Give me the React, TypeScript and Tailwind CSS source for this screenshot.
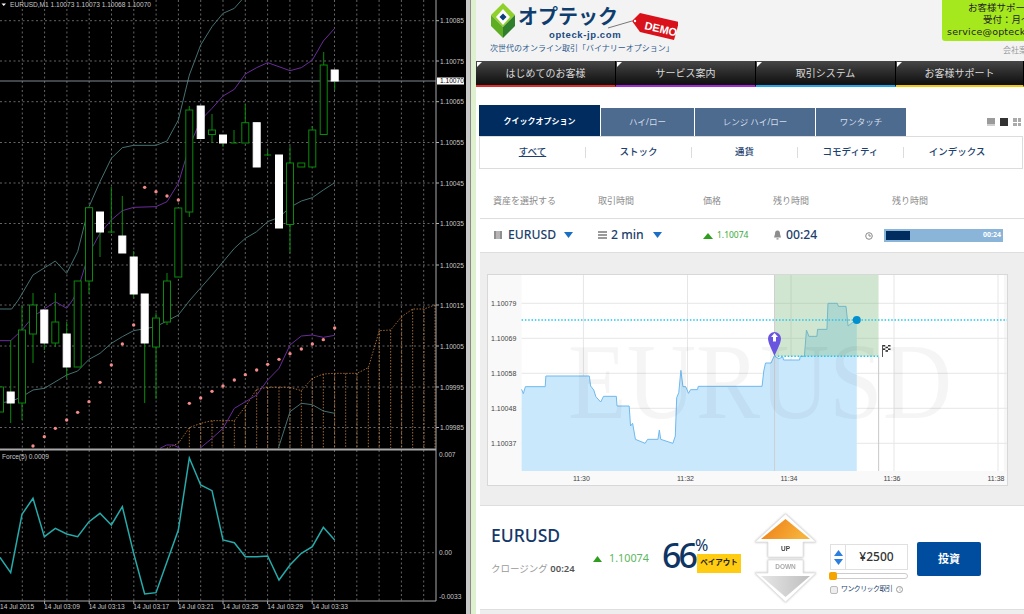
const grid = "#7d7d7d";
const green = "#0a8a0a";

// candles: x, body top, body bottom, wick top, wick bottom, white?
const candles: [number, number, number, number, number, boolean][] = [
  [0, 387, 412, 387, 412, false],
  [10.7, 392, 403, 340, 423, true],
  [22, 330, 403, 305, 420, false],
  [33, 305, 334, 293, 363, false],
  [44.3, 310, 343, 310, 350, true],
  [55.3, 322, 343, 293, 347, false],
  [66.7, 334, 367, 322, 378, true],
  [77.7, 281, 367, 281, 367, false],
  [89, 207.7, 281, 207, 294, false],
  [100, 212, 232, 212, 257, true],
  [111.3, 232, 232, 187, 233, false],
  [122.3, 236, 253, 196, 253, true],
  [133.7, 257, 294, 251, 298, true],
  [144.7, 294, 343, 294, 403, true],
  [156, 318, 347, 313, 399, false],
  [167, 281, 322, 273, 325, false],
  [178.3, 208, 277, 208, 277, false],
  [189.3, 110, 212, 106, 217, false],
  [200.7, 106, 138.5, 106, 138.5, true],
  [212, 130, 134.5, 114, 143, false],
  [223, 135, 143, 135, 147, true],
  [234, 143, 143, 130, 143, false],
  [245.3, 122.7, 143, 104, 143, false],
  [256.7, 122.7, 167, 122.7, 167, true],
  [267.7, 155, 155, 150, 156, false],
  [279, 155, 228, 155, 228, true],
  [290, 163, 224.5, 146, 253, false],
  [301.3, 163, 167, 163, 167, false],
  [312.3, 130, 167, 126, 167, false],
  [323.7, 65, 134.5, 52, 134.5, false],
  [334.7, 70, 81, 70, 90, true],
];

// the traces below are in 3x crop coordinates, top half and bottom half of the chart
const top = (p: number[][]) => p.map(([x, y]) => `${x / 3},${y / 3}`).join(" ");
const low = (p: number[][]) => p.map(([x, y]) => `${x / 3},${300 + y / 3}`).join(" ");

const bandUpperA = [[0, 27], [35, 27], [55, 0]];
const bandUpper = [[55, 900], [99, 825], [166, 783], [200, 820], [233, 755], [267, 620], [300, 545], [334, 475], [367, 443], [401, 436], [468, 436], [501, 423], [535, 360], [568, 225], [602, 135], [636, 80], [669, 40], [703, 25], [725, 0]];
const midA = [[0, 122], [32, 122], [66, 90], [99, 50], [133, 27], [166, 5], [200, 25], [218, 0]];
const mid = [[218, 900], [233, 870], [267, 760], [300, 700], [334, 660], [367, 632], [401, 622], [468, 620], [501, 605], [535, 550], [568, 440], [602, 360], [636, 325], [669, 288], [703, 268], [736, 222], [770, 203], [803, 188], [870, 212], [904, 203], [937, 180], [970, 123], [1004, 85]];
const purpleLow = [[600, 445], [636, 415], [669, 385], [703, 325], [770, 285], [803, 240], [837, 205], [870, 135], [904, 108], [937, 105], [970, 112], [1004, 106]];
const purpleBit = [[480, 445], [500, 435], [520, 435], [540, 445]];
const bandLowerTop = [[570, 900], [636, 825], [703, 745], [736, 715], [770, 695], [803, 665], [837, 652], [870, 622], [904, 603], [937, 593], [970, 570], [1004, 548]];
const bandLower = [[0, 308], [32, 305], [66, 290], [99, 270], [133, 265], [200, 225], [233, 213], [267, 178], [300, 160], [334, 130], [367, 110], [401, 92], [468, 80], [535, 45], [570, 0]];
const tealLow = [[835, 445], [870, 335], [904, 310], [937, 314], [970, 333], [1004, 340]];
const cloud = [[500, 445], [535, 430], [568, 383], [602, 370], [636, 362], [669, 362], [703, 362], [736, 320], [770, 268], [803, 262], [837, 262], [870, 262], [904, 272], [937, 235], [970, 222], [1004, 220], [1037, 220], [1071, 220], [1105, 203], [1138, 92], [1172, 90], [1205, 50], [1238, 27], [1272, 27], [1305, 15]];
const force = [[0, 772], [32, 818], [66, 643], [99, 595], [133, 710], [166, 685], [200, 702], [233, 710], [267, 665], [300, 640], [334, 675], [367, 620], [401, 760], [434, 882], [468, 878], [501, 785], [535, 690], [568, 474], [602, 555], [636, 572], [669, 720], [703, 728], [736, 770], [770, 770], [803, 768], [837, 840], [870, 795], [904, 760], [937, 740], [970, 682], [1004, 720]];
const sarTop = [[434, 562], [468, 575], [501, 588], [535, 600]];
const sarLow = [[99, 438], [133, 410], [166, 385], [200, 360], [233, 337], [267, 305], [300, 247], [334, 195], [367, 132], [401, 75], [568, 310], [602, 294], [636, 274], [669, 258], [703, 240], [736, 224], [770, 210], [803, 193], [837, 178], [870, 161], [904, 147], [937, 132], [970, 119], [1004, 84]];

const prices = [
  ["1.10085", 20.7], ["1.10075", 61], ["1.10065", 101.7], ["1.10055", 142.5], ["1.10045", 183],
  ["1.10035", 223.5], ["1.10025", 265], ["1.10015", 305], ["1.10005", 346], ["1.09995", 387], ["1.09985", 427.5],
] as const;
const times = ["14 Jul 03:09", "14 Jul 03:13", "14 Jul 03:17", "14 Jul 03:21", "14 Jul 03:25", "14 Jul 03:29", "14 Jul 03:33"];

function TradingChart() {
  const verticals = Array.from({ length: 19 }, (_, i) => 22.3 * (i + 1));
  return (
    <svg viewBox="0 0 466 614" className="w-[466px] h-[614px] shrink-0 bg-black" fontFamily="'Liberation Sans', sans-serif">
      {verticals.map((x) => (
        <line key={x} x1={x} x2={x} y1={0} y2={601} stroke={grid} strokeWidth={0.8} strokeDasharray="2 2.5" />
      ))}
      {prices.map(([p, y]) => (
        <g key={p}>
          <line x1={0} x2={436} y1={y} y2={y} stroke={grid} strokeWidth={0.8} strokeDasharray="2 2.5" />
          <line x1={436} x2={439} y1={y} y2={y} stroke="#b0b0b0" />
          <text x={440} y={y + 2.6} fontSize={6.6} fill="#c8c8c8">{p}</text>
        </g>
      ))}
      <line x1={0} x2={436} y1={552.7} y2={552.7} stroke={grid} strokeWidth={0.8} strokeDasharray="2 2.5" />

      {cloud.filter(([x]) => x >= 568).map(([x, y]) => (
        <line key={x} x1={x / 3} x2={x / 3} y1={300 + y / 3} y2={448} stroke="#c8813c" strokeWidth={0.8} strokeDasharray="1.5 1.5" />
      ))}
      <polyline points={low(cloud)} fill="none" stroke="#c8813c" strokeWidth={0.8} strokeDasharray="1.5 1.5" />

      <g fill="none" strokeWidth={1}>
        <polyline points={low(bandUpperA)} stroke="#467070" />
        <polyline points={top(bandUpper)} stroke="#467070" />
        <polyline points={low(bandLower)} stroke="#467070" />
        <polyline points={top(bandLowerTop)} stroke="#467070" />
        <polyline points={low(tealLow)} stroke="#467070" />
        <polyline points={low(midA)} stroke="#6a2c9c" />
        <polyline points={top(mid)} stroke="#6a2c9c" />
        <polyline points={low(purpleLow)} stroke="#6a2c9c" />
        <polyline points={low(purpleBit)} stroke="#6a2c9c" />
      </g>

      <line x1={0} x2={436} y1={81} y2={81} stroke="#7f898f" />

      {candles.map(([x, a, b, w1, w2, white]) => (
        <g key={x}>
          <line x1={x} x2={x} y1={w1} y2={w2} stroke={green} strokeWidth={1} />
          {a === b ? (
            <line x1={x - 3.5} x2={x + 3.5} y1={a} y2={a} stroke={green} strokeWidth={1} />
          ) : (
            <rect x={x - 3.5} y={a} width={7} height={b - a} fill={white ? "#fff" : "#000"} stroke={white ? "#fff" : green} strokeWidth={1} />
          )}
        </g>
      ))}

      {[...top(sarTop).split(" "), ...low(sarLow).split(" ")].map((pt) => {
        const [x, y] = pt.split(",").map(Number);
        return <circle key={pt} cx={x} cy={y} r={1.7} fill="#f58a8a" />;
      })}

      <rect x={0} y={448.5} width={436} height={2} fill="#a8a8a8" />
      <path d="M0 601H436V0" fill="none" stroke="#a8a8a8" strokeWidth={1} />

      <polyline points={low(force)} fill="none" stroke="#27aaaa" strokeWidth={1.5} />

      <polygon points="1.5,3.5 6,3.5 3.75,6" fill="#fff" />
      <text x={10} y={7} fontSize={6.6} fill="#c8c8c8" textLength={141}>EURUSD,M1  1.10073 1.10073 1.10068 1.10070</text>
      <text x={2} y={459} fontSize={6.6} fill="#c8c8c8">Force(5) 0.0009</text>

      <rect x={437} y={77.5} width={27} height={7} fill="#fff" />
      <text x={440} y={83.2} fontSize={6.6} fill="#000">1.10070</text>
      <text x={439} y={457} fontSize={6.6} fill="#c8c8c8">0.007</text>
      <text x={439} y={555} fontSize={6.6} fill="#c8c8c8">0.00</text>
      <text x={439} y={598.5} fontSize={6.6} fill="#c8c8c8">-0.0033</text>

      <text x={0} y={609} fontSize={6.6} fill="#c8c8c8">14 Jul 2015</text>
      {times.map((t, i) => (
        <g key={t}>
          <line x1={44.6 + 44.6 * i} x2={44.6 + 44.6 * i} y1={601} y2={604} stroke="#a8a8a8" />
          <text x={44 + 44.65 * i} y={609} fontSize={6.6} fill="#c8c8c8">{t}</text>
        </g>
      ))}
    </svg>
  );
}

function Logo() {
  return (
    <div className="relative w-[210px] pl-[15px] pt-[3px]">
      <div className="flex gap-[3px]">
        <svg viewBox="0 0 24 35" className="w-[24px] h-[35px] shrink-0">
          <polygon points="12,0 24,12 12,24 0,12" fill="#8fd12a" />
          <polygon points="0,12 12,24 12,35 0,23" fill="#5fae22" />
          <polygon points="24,12 12,24 12,35 24,23" fill="#2f7f2c" />
          <polygon points="12,6 19,14 12,22 5,14" fill="#fff" />
          <polygon points="12,10.5 15.5,14 12,17.5 8.5,14" fill="#0f3f78" />
        </svg>
        <div className="w-[110px]">
          <div className="text-[20px] leading-[26px] font-bold text-[#0e3d6e] font-['Noto_Sans_CJK_JP',sans-serif]">オプテック</div>
          <div className="mt-[1px] ml-[31px] text-[9.5px] leading-[10px] font-bold text-[#1a4a80] tracking-[0.6px] font-['Liberation_Sans',sans-serif]">opteck-jp.com</div>
        </div>
      </div>
      <div className="mt-[3px] -ml-[1px] text-[8px] leading-[10px] text-[#2f5a8c] whitespace-nowrap">次世代のオンライン取引「バイナリーオプション」</div>
      <svg viewBox="0 0 70 36" className="absolute left-[132px] top-[10px] w-[70px] h-[36px]">
        <line x1="0" y1="18" x2="24" y2="11" stroke="#777" strokeWidth="1" />
        <polygon points="32,3 71,12 66,30 32,22 24,11" fill="#d9111b" />
        <circle cx="27" cy="11" r="1.2" fill="#fff" />
        <text x="36" y="19" fontSize="11" fontWeight="700" fill="#fff" fontFamily="'Liberation Sans', sans-serif" transform="rotate(13 36 19)">DEMO</text>
      </svg>
    </div>
  );
}

const navItems = [
  { label: "はじめてのお客様", color: "border-b-[#e52b2b]", w: "w-[140px]" },
  { label: "サービス案内", color: "border-b-[#a32bd6]", w: "w-[140px]" },
  { label: "取引システム", color: "border-b-[#23a6e8]", w: "w-[140px]" },
  { label: "お客様サポート", color: "border-b-[#f2c80f]", w: "w-[128px]" },
];

function Nav() {
  return (
    <div className="flex h-[26px] shrink-0">
      {navItems.map((n) => (
        <div key={n.label} className={`${n.w} ${n.color} relative flex items-center justify-center border-b-2 border-r border-r-[#000] bg-gradient-to-b from-[#474747] to-[#0f0f0f] text-[10px] text-[#d8d8d8]`}>
          <span className="absolute left-[1px] top-[1px] h-0 w-0 border-t-[5px] border-r-[5px] border-t-white border-r-transparent" />
          {n.label}
        </div>
      ))}
    </div>
  );
}

function Tabs() {
  const other = [
    { label: "ハイ/ロー", w: "w-[93px]" },
    { label: "レンジ ハイ/ロー", w: "w-[120px]" },
    { label: "ワンタッチ", w: "w-[90px]" },
  ];
  return (
    <div className="flex items-end h-[49px] pl-[3px] shrink-0">
      <div className="w-[121px] h-[31px] mr-[1px] flex items-center justify-center bg-[#002c5f] text-white text-[8px] font-bold">クイックオプション</div>
      {other.map((t) => (
        <div key={t.label} className={`${t.w} h-[28px] mr-[1px] flex items-center justify-center bg-[#4d6a8f] text-[#d4dde8] text-[8.5px]`}>{t.label}</div>
      ))}
      <div className="ml-auto flex gap-[5px] pb-[10px] pr-[3px]">
        <div className="w-[8px] h-[8px] bg-[#9a9a9a] border-b-2 border-[#cfcfcf]" />
        <div className="w-[8px] h-[8px] bg-[#333]" />
        <div className="w-[8px] h-[8px] grid grid-cols-2 gap-[1px]">
          <span className="bg-[#aaa]" /><span className="bg-[#aaa]" /><span className="bg-[#aaa]" /><span className="bg-[#aaa]" />
        </div>
      </div>
    </div>
  );
}

function Categories() {
  const items = [
    { label: "すべて", cls: "underline" },
    { label: "ストック", cls: "" },
    { label: "通貨", cls: "" },
    { label: "コモディティ", cls: "" },
    { label: "インデックス", cls: "" },
  ];
  return (
    <div className="ml-[3px] mr-[1px] h-[33px] shrink-0 flex items-center bg-white border border-[#dcdcdc] text-[9.5px] font-medium text-[#1c3f6e]">
      {items.map((c, i) => (
        <div key={c.label} className={`w-[106px] h-[11px] flex items-center justify-center ${i < 4 ? "border-r border-[#dcdcdc]" : ""} ${c.cls}`}>{c.label}</div>
      ))}
    </div>
  );
}

function Caret() {
  return (
    <svg viewBox="0 0 9 6" className="w-[9px] h-[6px]">
      <polygon points="0,0 9,0 4.5,6" fill="#1a6fc4" />
    </svg>
  );
}

function AssetRow() {
  return (
    <>
      <div className="flex items-end h-[49px] pb-[11px] pl-[17px] text-[9px] leading-[12px] text-[#8a8a8a] shrink-0">
        <span className="w-[105px]">資産を選択する</span>
        <span className="w-[105px]">取引時間</span>
        <span className="w-[70px]">価格</span>
        <span className="w-[119px]">残り時間</span>
        <span>残り時間</span>
      </div>
      <div className="ml-[4px] h-[35px] flex items-center shrink-0 bg-white border-y border-[#dedede] text-[12.2px] font-medium text-[#1d3f6b]">
        <div className="w-[118px] pl-[14px] flex items-center">
          <span className="w-[8px] h-[8px] mr-[6px] bg-[#b5b5b5] border-x-2 border-[#8f8f8f]" />
          <span>EURUSD</span>
          <span className="ml-[8px]"><Caret /></span>
        </div>
        <div className="w-[105px] flex items-center">
          <span className="w-[9px] h-[8px] mr-[4px] flex flex-col justify-between">
            <i className="h-[2px] bg-[#9a9a9a]" /><i className="h-[2px] bg-[#9a9a9a]" /><i className="h-[2px] bg-[#9a9a9a]" />
          </span>
          <span>2 min</span>
          <span className="ml-[9px]"><Caret /></span>
        </div>
        <div className="w-[70px] flex items-center gap-[4px] text-[8.5px] font-normal text-[#3aaa3a]">
          <svg viewBox="0 0 10 6" className="w-[10px] h-[6px]"><polygon points="5,0 10,6 0,6" fill="#2f9e1f" /></svg>
          1.10074
        </div>
        <div className="w-[92px] flex items-center gap-[4px]">
          <svg viewBox="0 0 9 10" className="w-[9px] h-[10px]">
            <path d="M4.5 0.5C2.5 0.5 2 2 2 4L1 7.5H8L7 4C7 2 6.5 0.5 4.5 0.5ZM3.5 8.3H5.5V9.5H3.5Z" fill="#8d8d8d" />
          </svg>
          <span>00:24</span>
        </div>
        <div className="w-[19px] flex items-center">
          <svg viewBox="0 0 8 8" className="w-[8px] h-[8px]" fill="none" stroke="#888">
            <circle cx="4" cy="4" r="3.3" /><path d="M4 2V4H6" />
          </svg>
        </div>
        <div className="w-[119px] h-[13px] p-[2px] flex items-center justify-between bg-[#8ab4d8]">
          <span className="w-[24px] h-[9px] bg-[#002c5f]" />
          <span className="text-[7px] font-bold text-white">00:24</span>
        </div>
      </div>
    </>
  );
}

const area = [[117, 370], [122, 383], [128, 362], [185, 362], [187, 330], [312, 330], [316, 360], [325, 372], [331, 392], [345, 408], [353, 391], [390, 391], [392, 420], [427, 420], [431, 480], [437, 472], [445, 520], [473, 532], [480, 520], [510, 520], [514, 492], [518, 520], [553, 532], [560, 510], [564, 395], [570, 380], [576, 313], [582, 362], [590, 362], [598, 382], [604, 371], [624, 371], [626, 361], [810, 361], [815, 315], [820, 291], [836, 291], [845, 270], [858, 278], [870, 273], [872, 282], [918, 282], [920, 271], [932, 271], [938, 192], [945, 211], [968, 211], [970, 190], [997, 190], [1000, 112], [1027, 112], [1030, 121], [1052, 121], [1058, 180], [1070, 170], [1083, 162]];
const px = (x: number) => 480 + x / 2.882;
const py = (y: number) => 265 + y / 3;

function PriceChart() {
  const line = area.map(([x, y]) => `${px(x)},${py(y)}`).join(" ");
  const yLines = [["1.10079", 302.3], ["1.10069", 337.3], ["1.10058", 372.3], ["1.10048", 407.3], ["1.10037", 442.3]] as const;
  const xLines = [["11:30", 582.4], ["11:32", 686.5], ["11:34", 790], ["11:36", 893], ["11:38", 997]] as const;
  return (
    <svg viewBox="487 274 519 210" className="w-[519px] h-[210px] bg-white" fontFamily="'Liberation Sans', sans-serif">
      <rect x={487} y={274} width={33.6} height={210} fill="#f9f9f9" />
      <rect x={487} y={470} width={519} height={14} fill="#f9f9f9" />
      <rect x={1003} y={274} width={3} height={196} fill="#f7f7f7" />
      {yLines.map(([t, y]) => (
        <g key={t}>
          <line x1={520.6} x2={1006} y1={y} y2={y} stroke="#e6e6e6" />
          <text x={490} y={y + 2.5} fontSize={7} fill="#444">{t}</text>
        </g>
      ))}
      {xLines.map(([t, x]) => (
        <g key={t}>
          <line x1={x} x2={x} y1={274} y2={470} stroke="#e6e6e6" />
          <text x={x - 2} y={480} fontSize={7} fill="#444" textAnchor="middle">{t}</text>
        </g>
      ))}
      <polygon points={`${px(117)},470 ${line} ${px(1083)},470`} fill="#c9e8fc" />
      <polyline points={line} fill="none" stroke="#6fb9ee" strokeWidth={1} />
      <rect x={px(846)} y={274} width={104} height={py(271) - 274} fill="#7ab87a" fillOpacity={0.35} />
      <line x1={px(846)} x2={px(846)} y1={274} y2={470} stroke="#cfcfcf" />
      <line x1={px(1146)} x2={px(1146)} y1={356} y2={470} stroke="#c8c8c8" />
      <text x={567} y={417} fontSize={108} fontFamily="'Liberation Serif', serif" fill="#000" fillOpacity={0.04} textLength={384} lengthAdjust="spacingAndGlyphs">EURUSD</text>
      <line x1={520.6} x2={1006} y1={py(162)} y2={py(162)} stroke="#22c5ee" strokeWidth={1.5} strokeDasharray="1.5 1.8" />
      <line x1={px(846)} x2={px(1146)} y1={py(271)} y2={py(271)} stroke="#22c5ee" strokeWidth={1.5} strokeDasharray="1.5 1.8" />
      <circle cx={px(1083)} cy={py(162)} r={4} fill="#0090d0" />
      <path d="M767 337.5A6.5 6.5 0 1 1 780 337.5C780 342 775.5 350 773.5 355C771.5 350 767 342 767 337.5Z" fill="#6a55e0" />
      <path d="M773.5 332L777 336H775V340.5H772V336H770Z" fill="#fff" />
      <g>
        <rect x={881} y={344} width={1} height={12} fill="#555" />
        {[0, 1, 2, 3].map((r) =>
          [0, 1, 2].map((c) => (
            <rect key={`${r}${c}`} x={882 + c * 2.5} y={344 + r * 1.7} width={2.5} height={1.7} fill={(r + c) % 2 ? "#fff" : "#333"} />
          ))
        )}
      </g>
    </svg>
  );
}

function UpDown() {
  return (
    <svg viewBox="755 512 61 92" className="w-[61px] h-[92px] shrink-0 drop-shadow-[0_0_1px_#bbb]" fontFamily="'Liberation Sans', sans-serif">
      <defs>
        <linearGradient id="orange" x1="0" x2="1" y1="0" y2="0.3">
          <stop offset="0" stopColor="#ee7a12" />
          <stop offset="1" stopColor="#f6b23c" />
        </linearGradient>
        <linearGradient id="grey" x1="0" x2="1" y1="0" y2="0">
          <stop offset="0" stopColor="#e6e6e6" />
          <stop offset="1" stopColor="#bfbfbf" />
        </linearGradient>
      </defs>
      <polygon points="785.5,514 816,542 803,542 803,557 768,557 768,542 755,542" fill="#fff" stroke="#e2e2e2" strokeWidth={0.8} />
      <polygon points="785.5,519 810,539 761,539" fill="url(#orange)" />
      <text x={785.5} y={551} fontSize={6.5} fontWeight={700} fill="#444" textAnchor="middle">UP</text>
      <polygon points="768,560 803,560 803,573 816,573 785.5,602 755,573 768,573" fill="#fff" stroke="#e2e2e2" strokeWidth={0.8} />
      <polygon points="761,576 810,576 785.5,597" fill="url(#grey)" />
      <text x={785.5} y={569} fontSize={6.5} fontWeight={700} fill="#aaa" textAnchor="middle">DOWN</text>
    </svg>
  );
}

function TradePanel() {
  return (
    <div className="h-[105px] flex items-center shrink-0 bg-white border-y border-[#dedede] pl-[11px]">
      <div className="w-[102px] mb-[16px]">
        <div className="text-[17.5px] leading-[24px] font-medium text-[#14386a]">EURUSD</div>
        <div className="mt-[15px] text-[9.5px] leading-[14px] text-[#9a9a9a] whitespace-nowrap">クロージング <b className="text-[#555] font-semibold">00:24</b></div>
      </div>
      <div className="w-[69px] mt-[2px] flex items-center text-[10.8px] text-[#5cb85c]">
        <svg viewBox="0 0 9 6" className="w-[9px] h-[6px] mr-[7px]"><polygon points="4.5,0 9,6 0,6" fill="#2f9e1f" /></svg>
        1.10074
      </div>
      <div className="relative w-[93px] h-[50px] shrink-0">
        <span className="absolute left-0 top-0 text-[34px] leading-[44px] tracking-[-3px] font-medium text-[#0e3564]">66</span>
        <span className="absolute left-[33px] top-[2px] text-[16px] leading-[20px] text-[#0e3564]">%</span>
        <span className="absolute left-[35px] top-[21px] w-[44px] h-[19px] flex items-center justify-center bg-[#ffcc11] text-[7.5px] font-bold text-[#222]">ペイアウト</span>
      </div>
      <UpDown />
      <div className="ml-[14px] mt-[24px] w-[78px]">
        <div className="h-[26px] flex border border-[#e0e0e0] bg-white">
          <div className="w-[15px] flex flex-col items-center justify-center gap-[3px] border-r border-[#e0e0e0]">
            <svg viewBox="0 0 9 6" className="w-[9px] h-[6px]"><polygon points="4.5,0 9,6 0,6" fill="#2a7fe0" /></svg>
            <svg viewBox="0 0 9 6" className="w-[9px] h-[6px]"><polygon points="0,0 9,0 4.5,6" fill="#2a7fe0" /></svg>
          </div>
          <div className="flex-1 flex items-center justify-center text-[12px] font-medium text-[#333]">¥2500</div>
        </div>
        <div className="relative mt-[3px] h-[6px] rounded-full border border-[#ccc] bg-white">
          <span className="absolute -left-[2px] -top-[2px] w-[8px] h-[8px] rounded-[2px] bg-[#f5a500]" />
        </div>
        <div className="mt-[5px] flex items-center text-[7px] tracking-[-0.6px] text-[#1d3f6b] whitespace-nowrap">
          <span className="w-[8px] h-[8px] mr-[3px] rounded-[2px] border border-[#bbb] bg-[#eee]" />
          ワンクリック取引
          <span className="ml-[4px] w-[7px] h-[7px] rounded-full border border-[#999] text-[5px] leading-[5px] text-center text-[#888]">i</span>
        </div>
      </div>
      <div className="ml-[9px] mt-[3px] w-[64px] h-[34px] flex items-center justify-center rounded-[2px] bg-[#004da0] text-[11px] font-bold text-white">投資</div>
    </div>
  );
}

export default function App() {
  return (
    <div className="w-[1024px] h-[614px] overflow-hidden flex bg-white font-['Noto_Sans','Noto_Sans_CJK_JP',sans-serif]">
      <TradingChart />
      <div className="w-[5px] shrink-0 bg-[#c8c8c8] border-r border-[#8a8a8a]" />
      <div className="w-[5px] shrink-0 bg-[#dff0cf]" />
      <div className="w-[548px] shrink-0 flex flex-col">
        <div className="h-[61px] shrink-0 flex justify-between bg-[#f3f3f3]">
          <Logo />
          <div className="w-[82px] overflow-hidden">
            <div className="w-[150px] h-[41px] pt-[2px] rounded-bl-[3px] bg-[#a6e81e] text-[9.5px] leading-[12px] text-[#222]">
              <div className="ml-[26px]">お客様サポートデスク</div>
              <div className="ml-[41px]">受付：月〜金</div>
              <div className="ml-[5px] tracking-[0.2px] font-['DejaVu_Sans',sans-serif]">service@opteck-jp.com</div>
            </div>
            <div className="mt-[4px] ml-[61px] text-[8px] leading-[10px] text-[#999] whitespace-nowrap">会社案内</div>
          </div>
        </div>
        <Nav />
        <Tabs />
        <Categories />
        <AssetRow />
        <div className="ml-[4px] flex-1 flex flex-col bg-[#eeeeee]">
          <div className="ml-[7px] mt-[21px] w-[521px] h-[212px] shrink-0 border border-[#d8d8d8]">
            <PriceChart />
          </div>
          <div className="mt-[19px]">
            <TradePanel />
          </div>
        </div>
      </div>
    </div>
  );
}
